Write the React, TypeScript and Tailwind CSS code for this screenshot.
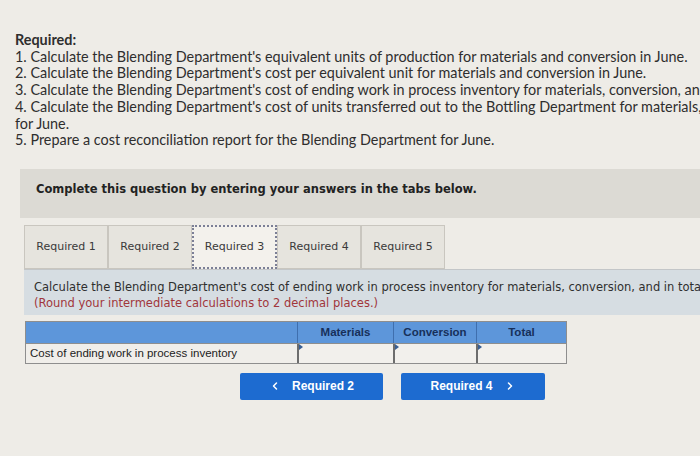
import React from "react";
import { ChevronLeft, ChevronRight } from "lucide-react";

const lines = [
  "1. Calculate the Blending Department's equivalent units of production for materials and conversion in June.",
  "2. Calculate the Blending Department's cost per equivalent unit for materials and conversion in June.",
  "3. Calculate the Blending Department's cost of ending work in process inventory for materials, conversion, and in total for June.",
  "4. Calculate the Blending Department's cost of units transferred out to the Bottling Department for materials, conversion, and in total",
];

const tabs = ["Required 1", "Required 2", "Required 3", "Required 4", "Required 5"];

function InputCell({ w }: { w: string }) {
  return (
    <div className={`relative h-full ${w} border-l-2 border-[#6d6d6d] bg-[#f2f0ec]`}>
      <span className="absolute left-0 top-0 h-0 w-0 border-y-[3px] border-l-[4px] border-y-transparent border-l-[#3a5f93]" />
    </div>
  );
}

export default function App() {
  return (
    <div className="h-[456px] w-[700px] overflow-hidden bg-[#eeece7]">
      <div className="whitespace-nowrap pl-[15px] pt-[32px] font-['Lato',sans-serif] text-[14.4px] leading-[16.7px] text-[#2e2e2e]">
        <div className="font-bold">Required:</div>
        {lines.map((l) => (
          <div key={l}>{l}</div>
        ))}
        <div>for June.</div>
        <div>5. Prepare a cost reconciliation report for the Blending Department for June.</div>
      </div>

      <div className="ml-[20px] mt-[20px] h-[49px] bg-[#dcdad4] pl-[16px] pt-[12px] font-['DejaVu_Sans',sans-serif] text-[11.5px] font-bold text-[#222]">
        Complete this question by entering your answers in the tabs below.
      </div>

      <div className="ml-[24px] mt-[7px] flex h-[44px] font-['DejaVu_Sans',sans-serif] text-[11px] text-[#3a3a3a]">
        {tabs.map((t, i) =>
          i === 2 ? (
            <div
              key={t}
              className="flex w-[85px] items-center justify-center border-2 border-dotted border-[#7b7f96] bg-[#f3f1ec]"
            >
              {t}
            </div>
          ) : (
            <div
              key={t}
              className="flex w-[84px] items-center justify-center border border-[#c9c6bf] bg-[#e6e4de]"
            >
              {t}
            </div>
          )
        )}
      </div>

      <div className="ml-[24px] h-[46px] whitespace-nowrap border-t border-[#c3c6c8] bg-[#d6dde2] pl-[10px] pt-[9px] font-['DejaVu_Sans',sans-serif] text-[11.5px] leading-[16px] text-[#2f2f2f]">
        <div>
          Calculate the Blending Department's cost of ending work in process inventory for materials, conversion, and in total for June.
        </div>
        <div className="text-[#a1363b]">(Round your intermediate calculations to 2 decimal places.)</div>
      </div>

      <div className="ml-[25px] mt-[6px] w-[542px] border border-[#8e8e8e] font-['Liberation_Sans',sans-serif] text-[11.5px] text-[#222]">
        <div className="flex h-[21px] bg-[#5d96da] font-bold text-[#17305a]">
          <div className="w-[271px]" />
          <div className="flex w-[96px] items-center justify-center border-l border-[#3f6fae]">Materials</div>
          <div className="flex w-[83px] items-center justify-center border-l border-[#3f6fae]">Conversion</div>
          <div className="flex flex-1 items-center justify-center border-l border-[#3f6fae]">Total</div>
        </div>
        <div className="flex h-[20px] border-t border-[#8e8e8e] bg-[#f0eeea]">
          <div className="flex w-[271px] items-center pl-[4px]">Cost of ending work in process inventory</div>
          <InputCell w="w-[96px]" />
          <InputCell w="w-[83px]" />
          <InputCell w="flex-1" />
        </div>
      </div>

      <div className="ml-[240px] mt-[9px] flex gap-[18px] font-['Liberation_Sans',sans-serif] text-[12px] font-bold text-white">
        <div className="flex h-[27px] w-[143px] items-center justify-center gap-[11px] rounded-[2px] bg-[#1d6bd0]">
          <ChevronLeft size={12} strokeWidth={3} />
          <span>Required 2</span>
        </div>
        <div className="flex h-[27px] w-[144px] items-center justify-center gap-[11px] rounded-[2px] bg-[#1d6bd0]">
          <span>Required 4</span>
          <ChevronRight size={12} strokeWidth={3} />
        </div>
      </div>
    </div>
  );
}
